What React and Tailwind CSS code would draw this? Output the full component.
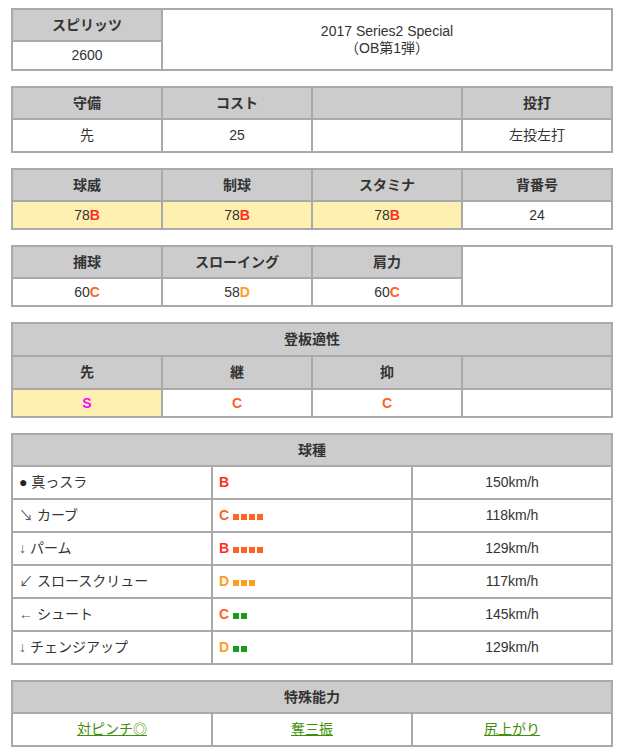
const FONT = { fontFamily: '"Liberation Sans", "Noto Sans CJK JP", sans-serif' };

const th = 'border-2 border-[#aaa] bg-[#ccc] h-[32px] p-0 text-center text-[14px] font-bold text-[#333]';
const td = 'border-2 border-[#aaa] bg-white h-[28px] p-0 text-center text-[14px] text-[#333]';
const hl = 'border-2 border-[#aaa] bg-[#fdf0b0] h-[28px] p-0 text-center text-[14px] text-[#333]';

const gradeColor = {
  S: 'text-[#ff00ff]',
  B: 'text-[#ff2d1e]',
  C: 'text-[#ff6322]',
  D: 'text-[#ff9d1f]',
};

function Grade({ g }) {
  return <span className={`font-bold ${gradeColor[g]}`}>{g}</span>;
}

function Four() {
  return (
    <colgroup>
      <col className="w-[150px]" />
      <col className="w-[150px]" />
      <col className="w-[150px]" />
      <col className="w-[150px]" />
    </colgroup>
  );
}

function Three() {
  return (
    <colgroup>
      <col className="w-[200px]" />
      <col className="w-[200px]" />
      <col className="w-[200px]" />
    </colgroup>
  );
}

const pitches = [
  { mark: '●', name: '真っスラ', grade: 'B', bars: 0, barColor: '', speed: '150km/h' },
  { mark: '↘', name: 'カーブ', grade: 'C', bars: 4, barColor: 'bg-[#ff6322]', speed: '118km/h' },
  { mark: '↓', name: 'パーム', grade: 'B', bars: 4, barColor: 'bg-[#ff6322]', speed: '129km/h' },
  { mark: '↙', name: 'スロースクリュー', grade: 'D', bars: 3, barColor: 'bg-[#ff9d1f]', speed: '117km/h' },
  { mark: '←', name: 'シュート', grade: 'C', bars: 2, barColor: 'bg-[#1a9a1a]', speed: '145km/h' },
  { mark: '↓', name: 'チェンジアップ', grade: 'D', bars: 2, barColor: 'bg-[#1a9a1a]', speed: '129km/h' },
];

export default function App() {
  const table = 'w-[600px] table-fixed border-collapse border-2 border-[#aaa] mb-[15px]';
  return (
    <div className="min-h-[752px] bg-white pl-[11px] pt-[8px]" style={FONT}>
      <table className={table}>
        <Four />
        <tbody>
          <tr>
            <th className={th}>スピリッツ</th>
            <td className={`${td} leading-[17px]`} colSpan={3} rowSpan={2}>
              2017 Series2 Special
              <br />
              （OB第1弾）
            </td>
          </tr>
          <tr>
            <td className={`${td} h-[29px]`}>2600</td>
          </tr>
        </tbody>
      </table>

      <table className={table}>
        <Four />
        <tbody>
          <tr>
            <th className={th}>守備</th>
            <th className={th}>コスト</th>
            <th className={th}></th>
            <th className={th}>投打</th>
          </tr>
          <tr>
            <td className={`${td} h-[33px]`}>先</td>
            <td className={`${td} h-[33px]`}>25</td>
            <td className={`${td} h-[33px]`}></td>
            <td className={`${td} h-[33px]`}>左投左打</td>
          </tr>
        </tbody>
      </table>

      <table className={table}>
        <Four />
        <tbody>
          <tr>
            <th className={th}>球威</th>
            <th className={th}>制球</th>
            <th className={th}>スタミナ</th>
            <th className={th}>背番号</th>
          </tr>
          <tr>
            <td className={hl}>78<Grade g="B" /></td>
            <td className={hl}>78<Grade g="B" /></td>
            <td className={hl}>78<Grade g="B" /></td>
            <td className={td}>24</td>
          </tr>
        </tbody>
      </table>

      <table className={table}>
        <Four />
        <tbody>
          <tr>
            <th className={th}>捕球</th>
            <th className={th}>スローイング</th>
            <th className={th}>肩力</th>
            <td className={td} rowSpan={2}></td>
          </tr>
          <tr>
            <td className={td}>60<Grade g="C" /></td>
            <td className={td}>58<Grade g="D" /></td>
            <td className={td}>60<Grade g="C" /></td>
          </tr>
        </tbody>
      </table>

      <table className={table}>
        <Four />
        <tbody>
          <tr>
            <th className={`${th} h-[33px]`} colSpan={4}>登板適性</th>
          </tr>
          <tr>
            <th className={`${th} h-[33px]`}>先</th>
            <th className={`${th} h-[33px]`}>継</th>
            <th className={`${th} h-[33px]`}>抑</th>
            <th className={`${th} h-[33px]`}></th>
          </tr>
          <tr>
            <td className={hl}><Grade g="S" /></td>
            <td className={td}><Grade g="C" /></td>
            <td className={td}><Grade g="C" /></td>
            <td className={td}></td>
          </tr>
        </tbody>
      </table>

      <table className={table}>
        <Three />
        <tbody>
          <tr>
            <th className={th} colSpan={3}>球種</th>
          </tr>
          {pitches.map((p, i) => (
            <tr key={i}>
              <td className={`${td} h-[33px] px-[6px] text-left`}>
                <span className={p.mark === '●' ? 'text-[#222]' : 'text-[#4a5a6a]'}>{p.mark}</span> {p.name}
              </td>
              <td className={`${td} h-[33px] px-[6px] text-left`}>
                <Grade g={p.grade} />
                {p.bars > 0 && (
                  <span className="ml-[4px] inline-flex gap-[2px]">
                    {Array.from({ length: p.bars }).map((_, j) => (
                      <span key={j} className={`inline-block h-[6px] w-[6px] ${p.barColor}`} />
                    ))}
                  </span>
                )}
              </td>
              <td className={`${td} h-[33px]`}>{p.speed}</td>
            </tr>
          ))}
        </tbody>
      </table>

      <table className={table}>
        <Three />
        <tbody>
          <tr>
            <th className={th} colSpan={3}>特殊能力</th>
          </tr>
          <tr>
            {['対ピンチ◎', '奪三振', '尻上がり'].map((s) => (
              <td key={s} className={`${td} h-[33px]`}>
                <a href="#" className="text-[#3f8f0a] underline">{s}</a>
              </td>
            ))}
          </tr>
        </tbody>
      </table>
    </div>
  );
}
